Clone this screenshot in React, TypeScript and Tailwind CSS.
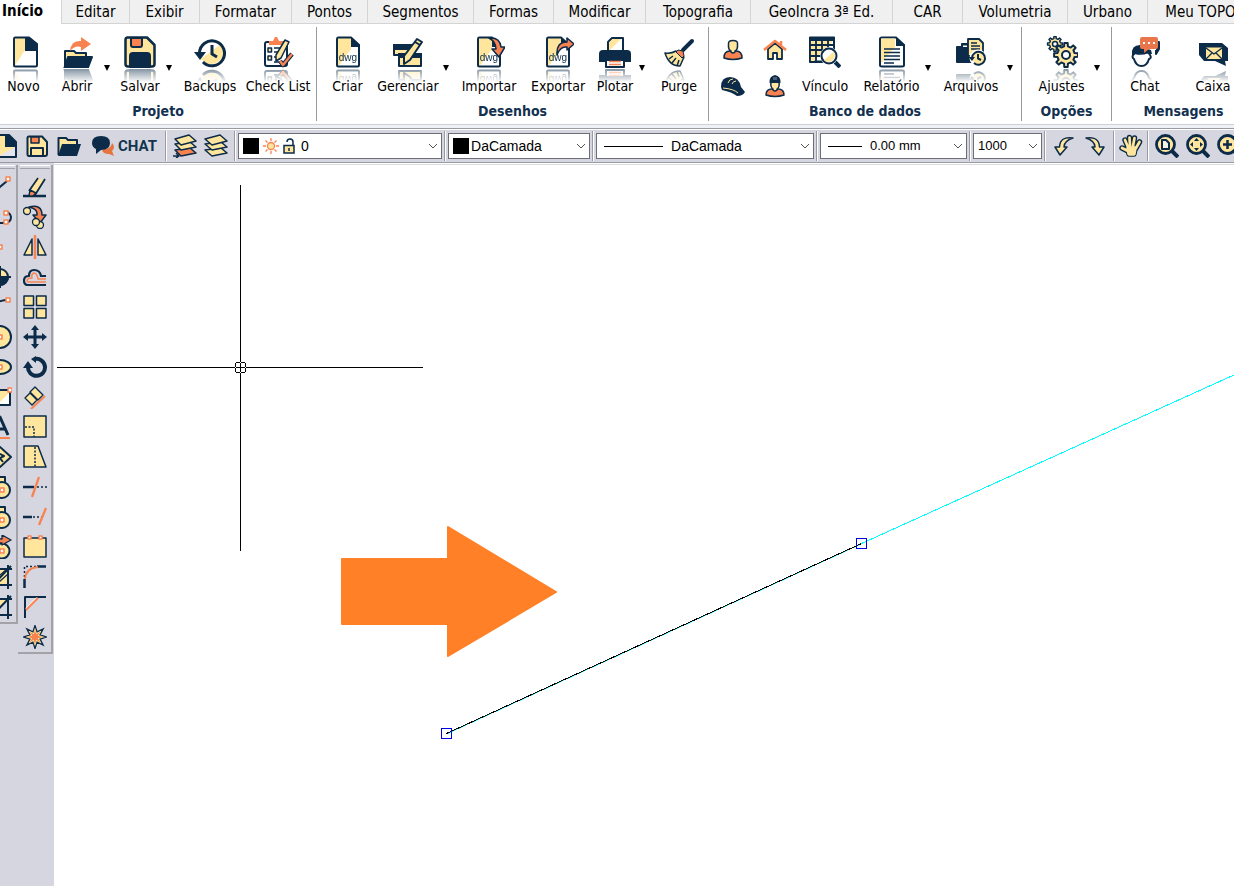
import type { ReactNode } from "react";

const N = "#0b2b49";
const Y = "#ffe69c";
const O = "#f98350";

type IconProps = { size?: number; children: ReactNode };

function Icon({ size = 32, children }: IconProps) {
  const box = size === 32 ? "h-8 w-8" : "h-6 w-6";
  return (
    <svg className={`${box} shrink-0`} viewBox={`0 0 ${size} ${size}`} fill="none" stroke={N} strokeWidth="2" strokeLinejoin="round" aria-hidden="true">
      {children}
    </svg>
  );
}

function starPath(cx: number, cy: number, outer: number, inner: number, points: number) {
  const out: string[] = [];
  for (let i = 0; i < points * 2; i++) {
    const r = i % 2 ? inner : outer;
    const a = (Math.PI * i) / points - Math.PI / 2;
    out.push(`${(cx + r * Math.cos(a)).toFixed(2)} ${(cy + r * Math.sin(a)).toFixed(2)}`);
  }
  return `M${out.join("L")}Z`;
}

function gearPath(cx: number, cy: number, outer: number, inner: number, teeth: number) {
  const out: string[] = [];
  const step = (Math.PI * 2) / teeth;
  for (let i = 0; i < teeth; i++) {
    const a = i * step;
    const corners = [
      [inner, -0.28],
      [outer, -0.18],
      [outer, 0.18],
      [inner, 0.28],
    ];
    for (const [r, k] of corners) {
      out.push(`${(cx + r * Math.cos(a + k * step)).toFixed(2)} ${(cy + r * Math.sin(a + k * step)).toFixed(2)}`);
    }
  }
  return `M${out.join("L")}Z`;
}

const sheet = (
  <>
    <path d="M5 1H19L27 9V29Q27 31 25 31H7Q5 31 5 29Z" fill="#fff" stroke="none" />
    <path d="M5 1H19V13L6 31H5Z" fill={Y} stroke="none" />
    <path d="M6 1.500H19L27 9V29Q27 30.500 25.500 30.500H6.500Q5 30.500 5 29V3Q5 1.500 6 1.500Z" />
    <path d="M19 1L28 9V11H19Z" fill={N} stroke="none" />
    <text x="16" y="25" textAnchor="middle" fontSize="10" fill={N} stroke="none" fontFamily="Liberation Sans, sans-serif">dwg</text>
  </>
);

const bigIcons: Record<string, ReactNode> = {
  novo: (
    <>
      <path d="M5 1H20L29 8V31H5Z" fill="#fff" stroke="none" />
      <path d="M5 1H17V14L6 31H5Z" fill={Y} stroke="none" />
      <path d="M7 1.500H21L29 8V29Q29 30.500 27.500 30.500H7.500Q6 30.500 6 29V3Q6 1.500 7 1.500Z" />
      <path d="M17 1H21L30 8V15H17Z" fill={N} stroke="none" />
    </>
  ),
  abrir: (
    <>
      <path d="M4 31V15H13L15 17H25V21" fill={Y} />
      <path d="M7 21H31L27 31.500H3.500Z" fill={N} />
      <path d="M9 15Q10 4 20 5V1L30 8L20 15V11Q14 9 9 15Z" fill={O} stroke="none" />
    </>
  ),
  salvar: (
    <>
      <path d="M3.500 1.500H23L30.500 9V28Q30.500 30.500 28 30.500H4Q1.500 30.500 1.500 28V4Q1.500 1.500 3.500 1.500Z" fill={Y} strokeWidth="2.500" />
      <path d="M7 2H18V9Q18 11 16 11H9Q7 11 7 9Z" fill={O} />
      <path d="M6 31V20Q6 17 9 17H23Q26 17 26 20V31Z" fill={N} />
    </>
  ),
  backups: (
    <>
      <circle cx="18" cy="17" r="12" fill="#fff" stroke="none" />
      <path d="M7 23L27 8A12 12 0 1 1 7 23Z" fill={Y} stroke="none" />
      <path d="M5.500 17A12.500 12.500 0 1 1 9 26" strokeWidth="3" />
      <path d="M0 16H12L6 24Z" fill={N} stroke="none" />
      <path d="M18 9V18L23 21" strokeWidth="3" />
    </>
  ),
  checklist: (
    <>
      <rect x="3" y="6" width="22" height="24" rx="2" fill="#fff" />
      <path d="M7 9V5H11L13 1H15L17 5H21V9Z" fill={O} stroke="none" />
      <path d="M6 12H9.500V16H6ZM6 20H9.500V24H6Z" fill={Y} strokeWidth="1.500" />
      <path d="M12 12H18M12 16H16M12 21H14M12 26H18" strokeWidth="1.500" />
      <path d="M23 4L27 6L19 22L14 25V19Z" fill={Y} strokeWidth="1.500" />
      <path d="M18 25L21 29L30 18" strokeWidth="4.500" />
      <path d="M18 25L21 29L30 18" stroke={O} strokeWidth="2.500" />
    </>
  ),
  criar: sheet,
  gerenciar: (
    <>
      <path d="M2 9H21V19H2Z" fill={Y} />
      <path d="M1 8H22V14H1Z" fill={N} stroke="none" />
      <path d="M7 18H29V30H7Z" fill={Y} />
      <path d="M6 17H30V22H6Z" fill={N} stroke="none" />
      <path d="M25 3L30 6L18 24L12 28V20Z" fill={Y} />
      <path d="M23 6L28 9" />
    </>
  ),
  importar: (
    <>
      {sheet}
      <path d="M16 2Q27 1 28 11L32 11L26 21L19 13H23Q23 6 16 2Z" fill={O} strokeWidth="1.500" />
    </>
  ),
  exportar: (
    <>
      {sheet}
      <path d="M15 19Q14 6 25 6V2L32 8L25 14V11Q18 10 15 19Z" fill={O} strokeWidth="1.500" />
    </>
  ),
  plotar: (
    <>
      <path d="M4 14H28Q32 14 32 18V26H0V18Q0 14 4 14Z" fill={N} stroke="none" />
      <path d="M9 15V6L13 2H24V15Z" fill="#fff" />
      <path d="M10 14V6.500L13.500 3H22L11 14Z" fill={Y} stroke="none" />
      <path d="M7 24H25V31H7Z" fill="#fff" />
      <path d="M10 25.500H22M10 28.500H22" stroke={O} strokeWidth="1.500" />
    </>
  ),
  purge: (
    <>
      <path d="M29 5L20 14" strokeWidth="4" strokeLinecap="round" />
      <path d="M13 15L21 21L17 30Q6 30 2 17Q8 18 13 15Z" fill={Y} strokeWidth="1.500" />
      <path d="M15 14L20 15L21 20L19 22L13 16Z" fill={O} strokeWidth="1" />
      <path d="M6 23L10 20M9 27L13 22M14 30L16 24" strokeWidth="1.500" />
    </>
  ),
  vinculo: (
    <>
      <rect x="1" y="1.500" width="24" height="24" fill="#fff" />
      <path d="M1 4L25 4L5 25H1Z" fill={Y} stroke="none" />
      <path d="M0 3H26" strokeWidth="4" />
      <path d="M1 9H25M1 14H25M1 20H25M7 2V26M13 2V26M19 2V26M1 2V26H25V2" strokeWidth="1.800" />
      <path d="M26 26L31 31" strokeWidth="4" />
      <circle cx="20" cy="20" r="9" fill="#fff" stroke="none" />
      <circle cx="20" cy="20" r="7.500" fill="#fff" />
      <path d="M15 24L25 15.500Q27 20 24 24Q19 28 15 24Z" fill={Y} stroke="none" />
    </>
  ),
  relatorio: (
    <>
      <path d="M6 1.500H20L28 9V29Q28 30.500 26 30.500H6Q4 30.500 4 29V3Q4 1.500 6 1.500Z" fill="#fff" />
      <path d="M5 2.500H19V11L6 26H5Z" fill={Y} stroke="none" />
      <path d="M20 1L29 9V10H20Z" fill={N} stroke="none" />
      <path d="M8 13H24M8 16.500H24M8 20H24M8 23.500H24M8 27H18" strokeWidth="1.600" />
    </>
  ),
  arquivos: (
    <>
      <path d="M2 11H7V8H13V11H17V26H2Z" fill={N} />
      <path d="M8 11V9.500H12V11Z" fill="#fff" stroke="none" />
      <path d="M13 3H24L28 7V20H13Z" fill={Y} strokeWidth="1.800" />
      <path d="M16 7H22M16 10H25M16 13H25" strokeWidth="1.500" />
      <circle cx="23" cy="22" r="8.500" fill="#fff" stroke="none" />
      <circle cx="23.500" cy="22" r="6" fill={Y} stroke="none" />
      <path d="M17 22A6.500 6.500 0 1 1 19 27M23 18V22.500L26 24" />
      <path d="M13.500 21H20L17 25Z" fill={N} stroke="none" />
    </>
  ),
  ajustes: (
    <>
      <path d={gearPath(9, 8, 7.5, 5.5, 8)} fill={Y} strokeWidth="1.500" />
      <circle cx="9" cy="8" r="2.500" fill="#fff" strokeWidth="1.500" />
      <path d={gearPath(20, 19, 12, 8.8, 8)} fill={Y} />
      <circle cx="20" cy="19" r="4" fill="#fff" />
    </>
  ),
  chat: (
    <>
      <path d="M28 6H30V13L27 18V14" fill={N} />
      <path d="M3 19Q2 9 11 9L15 12L22 14L23 18Z" fill={N} stroke="none" />
      <path d="M6 17Q13 19 19 16L21 19Q23 22 20 23Q18 30 12.500 30Q7 30 5 23Q2 21 5 18Z" fill="#fff" />
      <path d="M13 1H27Q29 1 29 3V11Q29 13 27 13H20L15 17V13H13Q11 13 11 11V3Q11 1 13 1Z" fill="#e9764a" stroke="none" />
      <path d="M14 7H16M19 7H21M24 7H26" stroke="#fff" />
    </>
  ),
  caixa: (
    <>
      <path d="M2 7H25L31 12V25H28L29 30L18 25H7L2 19Z" fill={N} stroke="none" />
      <path d="M9 11.500H25V23H9Z" fill={Y} stroke="none" />
      <path d="M9 12L17 18L25 12M9 23L15 17M25 23L19 17" strokeWidth="1.300" />
    </>
  ),
};

const smallIcons: Record<string, ReactNode> = {
  pessoa: (
    <>
      <path d="M3 20Q3 13 9 13H15Q21 13 21 20Q12 23 3 20Z" fill={O} strokeWidth="1.500" />
      <path d="M7.500 6Q7 2.500 12 2.500Q17 2.500 16.500 6Q17 12 14 13V14Q12 16 10 14V13Q7 12 7.500 6Z" fill={Y} strokeWidth="1.500" />
    </>
  ),
  casa: (
    <>
      <path d="M5 11V21H10V15H14V21H19V11L12 5Z" fill={Y} strokeWidth="1.800" />
      <path d="M1 12L12 3L23 12M18 7V3" stroke={O} strokeWidth="2.500" />
    </>
  ),
  capacete: (
    <>
      <path d="M0 13Q0 3 9 3Q18 3 20 13L24 18Q22 22 16 22Q11 18 1 16Z" fill={N} stroke="none" />
      <path d="M7 9Q8 5 12 5M11 10Q12 7 15 7M2 14Q13 15 17 19" stroke={Y} strokeWidth="1" />
    </>
  ),
  operario: (
    <>
      <path d="M3 21Q3 15 9 15H15Q21 15 21 21Q12 24 3 21Z" fill={O} strokeWidth="1.500" />
      <path d="M8 8H16Q17 13 14 15V16Q12 18 10 16V15Q7 13 8 8Z" fill={Y} strokeWidth="1.500" />
      <path d="M6.500 9Q6 2 12 1Q18 2 17.500 9Z" fill={N} stroke="none" />
      <path d="M11 3V6M13 3V6" stroke="#8b96a8" strokeWidth="1" />
    </>
  ),
  novo: (
    <>
      <path d="M2 1H16L23 8V23H2Z" fill={Y} />
      <path d="M22 13V22H6Z" fill="#e4e4ee" stroke="none" />
      <path d="M12 1H16L23 8V13H12Z" fill={N} stroke="none" />
    </>
  ),
  salvar: (
    <>
      <path d="M4 2.500H17L22 8V20Q22 22 20 22H4Q2.500 22 2.500 20V4Q2.500 2.500 4 2.500Z" fill={Y} />
      <path d="M6 3H14V9H6Z" fill={O} strokeWidth="1.500" />
      <path d="M6 22V14H18V22Z" fill={Y} />
    </>
  ),
  pasta: (
    <>
      <path d="M1.500 21V4H9L11 6H20V10" fill={Y} />
      <path d="M5 10H24L20 22H1Z" fill={N} stroke="none" />
    </>
  ),
  camadasAtual: (
    <>
      <path d="M2 16L17 14L23 19L8 22Z" fill={O} strokeWidth="1.500" />
      <path d="M2 10L17 8L23 13L8 16Z" fill={Y} strokeWidth="1.500" />
      <path d="M2 5L16 1L23 7L8 11Z" fill={Y} strokeWidth="1.500" />
      <path d="M0 22H5M3 19L6 22L3 24" strokeWidth="1.500" />
    </>
  ),
  camadas: (
    <>
      <path d="M1 16L17 14L23 19L8 22Z" fill={Y} strokeWidth="1.500" />
      <path d="M1 10L17 8L23 13L8 16Z" fill={Y} strokeWidth="1.500" />
      <path d="M1 5L16 1L23 7L8 11Z" fill={Y} strokeWidth="1.500" />
    </>
  ),
  desfazer: <path d="M21 4Q8 2 7.500 13H3L8 21L15 13H12Q12 7 21 4Z" fill={Y} strokeWidth="1.500" />,
  refazer: <path d="M3 4Q16 2 16.500 13H21L16 21L9 13H12Q12 7 3 4Z" fill={Y} strokeWidth="1.500" />,
  mao: (
    <>
      <g strokeLinecap="round" strokeWidth="5.500">
        <path d="M9 17L3 14M9 13L6 6M11 12L10.500 3.500M14 12L15.500 4M17 14L20.500 8" />
        <path d="M9 15H16L15 20H10Z" />
      </g>
      <g strokeLinecap="round" strokeWidth="2.700" stroke={Y} fill={Y}>
        <path d="M9 17L3 14M9 13L6 6M11 12L10.500 3.500M14 12L15.500 4M17 14L20.500 8" />
        <path d="M9 14H16L15 20H10Z" strokeWidth="3.500" />
      </g>
    </>
  ),
  lupaFolha: (
    <>
      <path d="M16 16L23 23" strokeWidth="4" />
      <circle cx="10.500" cy="10.500" r="9" fill={Y} strokeWidth="2.800" />
      <path d="M7 6H11L14 9V15H7Z" fill="#f3f1e8" />
    </>
  ),
  lupaExtensao: (
    <>
      <path d="M16 16L23 23" strokeWidth="4" />
      <circle cx="10.500" cy="10.500" r="9" fill={Y} strokeWidth="2.800" />
      <path d="M8 7L10.500 4L13 7ZM8 14L10.500 17L13 14ZM7 8L4 10.500L7 13ZM14 8L17 10.500L14 13Z" fill={N} stroke="none" />
    </>
  ),
  lupaMais: (
    <>
      <path d="M16 16L23 23" strokeWidth="4" />
      <circle cx="10.500" cy="10.500" r="9" fill={Y} strokeWidth="2.800" />
      <path d="M6 10.500H15M10.500 6V15" strokeWidth="2.500" />
    </>
  ),
  apagar: (
    <>
      <path d="M0 21H23" strokeWidth="2.500" />
      <path d="M13 3L21 5L13 19L7 15Z" fill={Y} stroke="none" />
      <path d="M15 3L6 16M22 4L12 20" strokeWidth="1.800" />
      <path d="M7 15L13 18L10 21H6Z" fill={O} strokeWidth="1.500" />
    </>
  ),
  copiar: (
    <>
      <path d="M6 2Q19 -1 19 10H23L17 18L10 10H14Q15 4 6 2Z" fill={O} strokeWidth="1.500" />
      <circle cx="4" cy="6" r="3.500" fill={Y} strokeWidth="1.300" />
      <circle cx="17" cy="20" r="3.500" fill={Y} strokeWidth="1.300" />
      <circle cx="13" cy="17" r="3.500" fill={Y} strokeWidth="1.300" />
    </>
  ),
  espelhar: (
    <>
      <path d="M9 4V20H1ZM15 4V20H23Z" fill={Y} strokeWidth="1.500" />
      <path d="M12 0V24" stroke={O} strokeWidth="2.500" />
    </>
  ),
  offset: (
    <>
      <path d="M23 11H18Q17 5 11 5Q6 5 6 11Q1 11 1 15.500Q1 20 5 20H23" strokeWidth="2.200" />
      <path d="M23 14H15Q14 8 11 8Q8 9 9 13Q4 13 4 16Q4 17 6 17H23" stroke={O} strokeWidth="1.500" />
    </>
  ),
  matriz: <path d="M1 1H10.500V10.500H1ZM13.500 1H23V10.500H13.500ZM1 13.500H10.500V23H1ZM13.500 13.500H23V23H13.500Z" fill={Y} strokeWidth="1.500" />,
  mover: <path d="M12 0L16 5H13.500V10.500H19V8L24 12L19 16V13.500H13.500V19H16L12 24L8 19H10.500V13.500H5V16L0 12L5 8V10.500H10.500V5H8Z" fill={N} stroke="none" />,
  rotacionar: (
    <>
      <path d="M5 12A8.500 8.500 0 1 0 12 4" strokeWidth="4" />
      <path d="M0 13H10L5 6Z" fill={N} stroke="none" />
      <path d="M13 1V8L8 4Z" fill={N} stroke="none" />
    </>
  ),
  alinhar: (
    <>
      <path d="M12 2L20 10L15 15L7 7ZM7 8L14 15L9 20L2 13Z" fill={Y} strokeWidth="1.400" />
      <path d="M8 24L22 11" stroke={O} />
    </>
  ),
  escala: (
    <>
      <path d="M1 1H23V22H1Z" fill={Y} strokeWidth="1.500" />
      <path d="M2 12H11V22" strokeDasharray="2 1.500" strokeWidth="1.500" />
    </>
  ),
  esticar: (
    <>
      <path d="M1 1H15L23 22H1Z" fill={Y} strokeWidth="1.500" />
      <path d="M12 2V22" strokeDasharray="2 1.500" strokeWidth="1.500" />
    </>
  ),
  aparar: (
    <>
      <path d="M0 12H11" strokeWidth="2.500" />
      <path d="M14 12H24" strokeDasharray="2 2" strokeWidth="1.500" />
      <path d="M16 2L9 22" stroke={O} strokeWidth="2.300" />
    </>
  ),
  estender: (
    <>
      <path d="M0 12H9" strokeWidth="2.500" />
      <path d="M10 12H19" strokeDasharray="2 2" strokeWidth="1.500" />
      <path d="M23 3L16 20" stroke={O} strokeWidth="2.300" />
    </>
  ),
  quebrar: (
    <>
      <path d="M1 3H23V22H1Z" fill={Y} strokeWidth="1.500" />
      <path d="M5 1H8V4H5ZM16 1H19V4H16Z" fill="#fff" stroke={O} strokeWidth="1.500" />
    </>
  ),
  concordar: (
    <>
      <path d="M14 1.500H23M1.500 14V23" strokeWidth="2.500" />
      <path d="M1.500 12V1.500H14" strokeDasharray="2 2" strokeWidth="1.500" />
      <path d="M2 14Q3 3 15 2" stroke={O} />
    </>
  ),
  chanfrar: (
    <>
      <path d="M2 23V2H23" />
      <path d="M3 14L14 3" stroke="#fff" strokeWidth="2" />
      <path d="M3 15L15 3" stroke={O} />
    </>
  ),
  explodir: (
    <>
      <path d={starPath(12, 12, 11.5, 5.5, 8)} fill={Y} strokeWidth="1.300" strokeLinejoin="miter" />
      <path d={starPath(12, 12, 7.5, 3, 8)} fill={O} stroke="none" />
    </>
  ),
  linha: (
    <>
      <path d="M1 21L19 6" />
      <path d="M18 2H22V6H18Z" fill="#fff" stroke={O} strokeWidth="1.500" />
    </>
  ),
  polilinha: (
    <>
      <path d="M2 18H16Q23 18 23 12Q22 7 17 7" />
      <path d="M16 6H20V10H16ZM16 15H20V19H16Z" fill="#fff" stroke={O} strokeWidth="1.500" />
    </>
  ),
  ponto: <path d="M10 10H14V14H10Z" fill="#fff" stroke={O} strokeWidth="1.500" />,
  marco: (
    <>
      <circle cx="12" cy="12" r="8" fill={Y} />
      <path d="M12 12H20A8 8 0 0 1 12 20ZM12 12V4A8 8 0 0 0 4 12Z" fill={N} />
      <path d="M1 12H23M12 1V23" />
    </>
  ),
  arco: (
    <>
      <path d="M1 21Q4 6 18 5" />
      <path d="M18 3H22V7H18Z" fill="#fff" stroke={O} strokeWidth="1.500" />
    </>
  ),
  circulo: (
    <>
      <circle cx="12" cy="12" r="11" fill={Y} />
      <path d="M10 10H14V14H10Z" fill="#fff" stroke={O} strokeWidth="1.500" />
    </>
  ),
  elipse: (
    <>
      <ellipse cx="12" cy="12" rx="11" ry="7" fill={Y} />
      <path d="M10 10H14V14H10Z" fill="#fff" stroke={O} strokeWidth="1.500" />
    </>
  ),
  retangulo: (
    <>
      <path d="M1 5H22V20H1Z" fill={Y} />
      <path d="M21 8V19H10Z" fill="#fff" stroke="none" />
      <path d="M20 3H24V7H20Z" fill="#fff" stroke={O} strokeWidth="1.500" />
    </>
  ),
  texto: (
    <>
      <path d="M4 20L12 2L20 20M7 14H17" strokeWidth="3" />
      <path d="M2 23H22" stroke={O} />
    </>
  ),
  simbolo: (
    <>
      <path d="M12 2L23 12L12 22L1 12Z" fill={Y} />
      <path d="M10 8L16 11L12 13L15 17M12 13L8 16" />
    </>
  ),
  medida: (
    <>
      <path d="M6 2H17V8H6Z" fill={Y} />
      <circle cx="14" cy="15" r="8" fill={Y} />
      <path d="M12 13H16V17H12Z" fill="#fff" stroke={O} strokeWidth="1.500" />
    </>
  ),
  medidaSeta: (
    <>
      <circle cx="14" cy="16" r="7.500" fill={Y} />
      <path d="M3 8Q8 3 14 4V0L23 5L14 10V8Z" fill={O} strokeWidth="1.300" />
      <path d="M12 14H16V18H12Z" fill="#fff" stroke={O} strokeWidth="1.500" />
    </>
  ),
  hachura: (
    <>
      <path d="M2 4H20V20H2Z" fill={Y} stroke="none" />
      <path d="M5 16L19 4M10 18L20 9" strokeWidth="1.300" />
      <path d="M0 20H24M20 0V24M0 4H24M3 22L23 1" />
    </>
  ),
  contorno: (
    <>
      <path d="M2 4H20L4 20Z" fill={Y} stroke="none" />
      <path d="M0 20H24M20 0V24M0 4H24M3 22L23 1" />
    </>
  ),
};

const tabs: [string, string][] = [
  ["Editar", "w-[68px]"],
  ["Exibir", "w-[70px]"],
  ["Formatar", "w-[92px]"],
  ["Pontos", "w-[76px]"],
  ["Segmentos", "w-[106px]"],
  ["Formas", "w-20"],
  ["Modificar", "w-[92px]"],
  ["Topografia", "w-[105px]"],
  ["GeoIncra 3ª Ed.", "w-[142px]"],
  ["CAR", "w-[70px]"],
  ["Volumetria", "w-[105px]"],
  ["Urbano", "w-20"],
  ["Meu TOPO", "w-[106px]"],
];

type ActionProps = { icon: string; label: string; width: string; menu?: boolean; flat?: boolean };

function Action({ icon, label, width, menu, flat }: ActionProps) {
  return (
    <div className="flex shrink-0">
      <button className={`${width} flex shrink-0 flex-col items-center`}>
        <span className={flat ? "block" : "block [-webkit-box-reflect:below_1px_linear-gradient(transparent_58%,rgba(0,0,0,0.5))]"}>
          <Icon>{bigIcons[icon]}</Icon>
        </span>
        <span className="relative mt-2 whitespace-nowrap text-[14px] leading-5 text-black">{label}</span>
      </button>
      {menu && (
        <button aria-label={`Mais opções de ${label}`} className="flex w-2 shrink-0 items-start justify-center pt-7">
          <svg className="h-2 w-2" viewBox="0 0 8 8" aria-hidden="true">
            <path d="M1 1H7L4 7Z" fill="#000" />
          </svg>
        </button>
      )}
    </div>
  );
}

type GroupProps = { title: string; width: string; padding?: string; children: ReactNode };

function Group({ title, width, padding = "pl-2", children }: GroupProps) {
  return (
    <section className={`${width} shrink-0 border-r border-[#9a9a9a] pt-[9px]`}>
      <div className={`${padding} flex h-[60px] gap-1`}>{children}</div>
      <h2 className="mt-[5px] text-center text-[14px] leading-5 font-bold text-[#12304f]">{title}</h2>
    </section>
  );
}

function SmallAction({ icon, label }: { icon: string; label: string }) {
  return (
    <button aria-label={label} className="flex w-8 justify-center">
      <Icon size={24}>{smallIcons[icon]}</Icon>
    </button>
  );
}

function Ribbon() {
  return (
    <div className="flex overflow-hidden border-b border-[#d0d0d4] py-[3px]">
      <Group title="Projeto" width="w-[317px]" padding="pl-0">
        <Action icon="novo" label="Novo" width="w-[47px]" />
        <Action icon="abrir" label="Abrir" width="w-[52px]" menu />
        <Action icon="salvar" label="Salvar" width="w-[50px]" menu />
        <Action icon="backups" label="Backups" width="w-[66px]" />
        <Action icon="checklist" label="Check List" width="w-[62px]" />
      </Group>
      <Group title="Desenhos" width="w-[392px]">
        <Action icon="criar" label="Criar" width="w-[45px]" />
        <Action icon="gerenciar" label="Gerenciar" width="w-[68px]" menu />
        <Action icon="importar" label="Importar" width="w-[70px]" />
        <Action icon="exportar" label="Exportar" width="w-[60px]" />
        <Action icon="plotar" label="Plotar" width="w-[46px]" menu />
        <Action icon="purge" label="Purge" width="w-[58px]" />
      </Group>
      <Group title="Banco de dados" width="w-[313px]">
        <div className="grid shrink-0 grid-cols-2 content-start gap-x-[10px] gap-y-3 pt-[2px]">
          <SmallAction icon="pessoa" label="Pessoas" />
          <SmallAction icon="casa" label="Imóveis" />
          <SmallAction icon="capacete" label="Profissionais" />
          <SmallAction icon="operario" label="Equipe" />
        </div>
        <Action icon="vinculo" label="Vínculo" width="w-[60px]" flat />
        <Action icon="relatorio" label="Relatório" width="w-[65px]" menu />
        <Action icon="arquivos" label="Arquivos" width="w-[70px]" menu />
      </Group>
      <Group title="Opções" width="w-[90px]">
        <Action icon="ajustes" label="Ajustes" width="w-[63px]" menu />
      </Group>
      <Group title="Mensagens" width="w-[144px]">
        <Action icon="chat" label="Chat" width="w-[50px]" />
        <Action icon="caixa" label="Caixa" width="w-[78px]" />
      </Group>
    </div>
  );
}

function Separator() {
  return <div className="h-[30px] w-[2px] shrink-0 border-x border-l-[#9a9aa2] border-r-white" />;
}

function ToolButton({ icon, label }: { icon: string; label: string }) {
  return (
    <button aria-label={label} className="shrink-0">
      <Icon size={24}>{smallIcons[icon]}</Icon>
    </button>
  );
}

type PickerProps = { label: string; value: string; width: string; text?: string; children?: ReactNode };

function Picker({ label, value, width, text = "pl-0 text-[14px]", children }: PickerProps) {
  return (
    <div className={`${width} relative mx-[2px] flex h-[26px] shrink-0 items-center border border-[#6e6e78] bg-white pl-1`}>
      {children}
      <select aria-label={label} className={`${text} min-w-0 flex-1 appearance-none bg-transparent font-['Liberation_Sans',sans-serif] leading-5 text-black outline-none`}>
        <option>{value}</option>
      </select>
      <svg className="pointer-events-none absolute right-1 h-2 w-2" viewBox="0 0 8 8" fill="none" stroke="#555" aria-hidden="true">
        <path d="M0 2L4 6L8 2" />
      </svg>
    </div>
  );
}

function Toolbar() {
  return (
    <div className="flex h-[33px] items-center overflow-hidden border-t border-white">
      <div className="-ml-[7px] flex shrink-0 items-center gap-2 pr-2">
        <ToolButton icon="novo" label="Novo" />
        <ToolButton icon="salvar" label="Salvar" />
        <ToolButton icon="pasta" label="Abrir" />
        <button className="ml-[2px] flex items-center gap-[3px] font-['Roboto',sans-serif] text-[15px] leading-5 font-bold text-[#12344f]">
          <svg className="h-6 w-6" viewBox="0 0 24 24" aria-hidden="true">
            <path d="M13 15Q20 15 21 9Q25 13 21 17L23 22L18 20Q12 20 11 16Z" fill="#e5743f" />
            <path d="M10 2Q19 2 19 9Q19 16 10 16L5 20L5 15Q1 13 1 9Q1 2 10 2Z" fill={N} />
          </svg>
          CHAT
        </button>
      </div>
      <Separator />
      <div className="flex shrink-0 gap-[7px] px-[6px]">
        <ToolButton icon="camadasAtual" label="Definir camada atual" />
        <ToolButton icon="camadas" label="Camadas" />
      </div>
      <Separator />
      <Picker label="Camada" value="0" width="w-[204px]" text="pl-[2px] text-[14px]">
        <span className="h-4 w-4 shrink-0 bg-black" />
        <svg className="ml-1 h-4 w-4 shrink-0" viewBox="0 0 16 16" stroke={O} strokeWidth="1.300" aria-hidden="true">
          <path d="M8 0V3M8 13V16M0 8H3M13 8H16M2.500 2.500L4.500 4.500M11.500 11.500L13.500 13.500M13.500 2.500L11.500 4.500M2.500 13.500L4.500 11.500" />
          <circle cx="8" cy="8" r="3.500" fill={Y} />
        </svg>
        <svg className="mr-1 ml-1 h-4 w-3 shrink-0" viewBox="0 0 12 16" fill="none" stroke={N} strokeWidth="1.500" aria-hidden="true">
          <path d="M4 4Q4 1 7 1Q10 1 10 4V8" />
          <path d="M1 7.500H11V15H1Z" fill={Y} />
          <path d="M6 10V13" />
        </svg>
      </Picker>
      <Separator />
      <Picker label="Cor" value="DaCamada" width="w-[142px]" text="pl-[2px] text-[14px]">
        <span className="h-4 w-4 shrink-0 bg-black" />
      </Picker>
      <Separator />
      <Picker label="Tipo de linha" value="DaCamada" width="w-[218px]" text="pl-2 text-[14px]">
        <span className="ml-[3px] h-px w-[59px] shrink-0 bg-black" />
      </Picker>
      <Separator />
      <Picker label="Espessura" value="0.00 mm" width="w-[147px]" text="pl-2 text-[13px]">
        <span className="ml-[3px] h-px w-[34px] shrink-0 bg-black" />
      </Picker>
      <Separator />
      <Picker label="Escala" value="1000" width="w-[69px]" text="pl-0 text-[13px]" />
      <Separator />
      <div className="flex shrink-0 gap-[7px] px-[6px]">
        <ToolButton icon="desfazer" label="Desfazer" />
        <ToolButton icon="refazer" label="Refazer" />
      </div>
      <Separator />
      <div className="flex shrink-0 px-1">
        <ToolButton icon="mao" label="Mover vista" />
      </div>
      <Separator />
      <div className="flex shrink-0 gap-[7px] px-[6px]">
        <ToolButton icon="lupaFolha" label="Zoom na folha" />
        <ToolButton icon="lupaExtensao" label="Zoom extensão" />
        <ToolButton icon="lupaMais" label="Mais zoom" />
      </div>
    </div>
  );
}

const drawTools = ["linha", "polilinha", "ponto", "marco", "arco", "circulo", "elipse", "retangulo", "texto", "simbolo", "medida", "medida", "medidaSeta", "hachura", "contorno"];
const editTools = ["apagar", "copiar", "espelhar", "offset", "matriz", "mover", "rotacionar", "alinhar", "escala", "esticar", "aparar", "estender", "quebrar", "concordar", "chanfrar", "explodir"];

function ToolColumn({ tools, label }: { tools: string[]; label: string }) {
  return (
    <div role="toolbar" aria-label={label} className="flex w-[35px] flex-col items-center gap-[6px] border-r-2 border-b-2 border-[#a2a2a8] pb-[3px]">
      <div className="h-1 w-[30px] border-y border-t-white border-b-[#a2a2a8]" />
      {tools.map((name, i) => (
        <ToolButton key={i} icon={name} label={name} />
      ))}
    </div>
  );
}

function Canvas() {
  return (
    <svg className="min-w-0 flex-1 self-stretch bg-white" role="img" aria-label="Área de desenho" shapeRendering="crispEdges" fill="none">
      <path d="M0 1.500H1400" stroke="#dcdce0" />
      <path d="M186.500 22V388M3 204.500H369" stroke="#000" />
      <path d="M182 199.500H191M182 209.500H191M181.500 200V209M191.500 200V209" stroke="#000" />
      <path d="M186 199.500H187M186 209.500H187M181 204.500H182M191 204.500H192" stroke="#fff" />
      <path d="M288 396H394V364L502 429L394 493V461H288Z" fill="#ff8026" stroke="#ff8026" strokeWidth="2" strokeLinejoin="round" shapeRendering="auto" />
      <path d="M807.500 380.500L1181 211.500" stroke="#00ffff" />
      <path d="M393 570.700L807.500 380.800" stroke="#00ffff" />
      <path d="M392.500 570.500L807.500 380.500" stroke="#000" />
      <path d="M387.500 565.500H397.500V575.500H387.500ZM802.500 375.500H812.500V385.500H802.500Z" stroke="#0000e0" />
    </svg>
  );
}

export default function App() {
  return (
    <div className="flex min-h-screen flex-col overflow-hidden bg-white font-['DejaVu_Sans_Condensed','Noto_Sans',sans-serif]">
      <nav aria-label="Menu principal" className="flex h-6 overflow-hidden">
        <a href="#inicio" className="w-[61px] shrink-0 pl-[2px] text-[15px] leading-[22px] font-bold text-black">Início</a>
        {tabs.map(([name, width]) => (
          <a key={name} href={`#${name}`} className={`${width} shrink-0 overflow-hidden border-b border-l border-[#d4d4d4] bg-[#f0f0f0] text-center text-[15px] leading-6 whitespace-nowrap text-black`}>
            {name}
          </a>
        ))}
      </nav>
      <Ribbon />
      <div className="h-1 border-b border-[#9a9aa2] bg-[#f0f0f8]" />
      <div className="border-b border-[#9a9aa2] bg-[#d6d6e1]">
        <Toolbar />
      </div>
      <div className="flex flex-1">
        <aside className="-ml-[17px] flex w-[71px] shrink-0 items-start bg-[#d6d6e1] pt-[2px]">
          <ToolColumn tools={drawTools} label="Desenhar" />
          <ToolColumn tools={editTools} label="Modificar" />
        </aside>
        <Canvas />
      </div>
    </div>
  );
}
